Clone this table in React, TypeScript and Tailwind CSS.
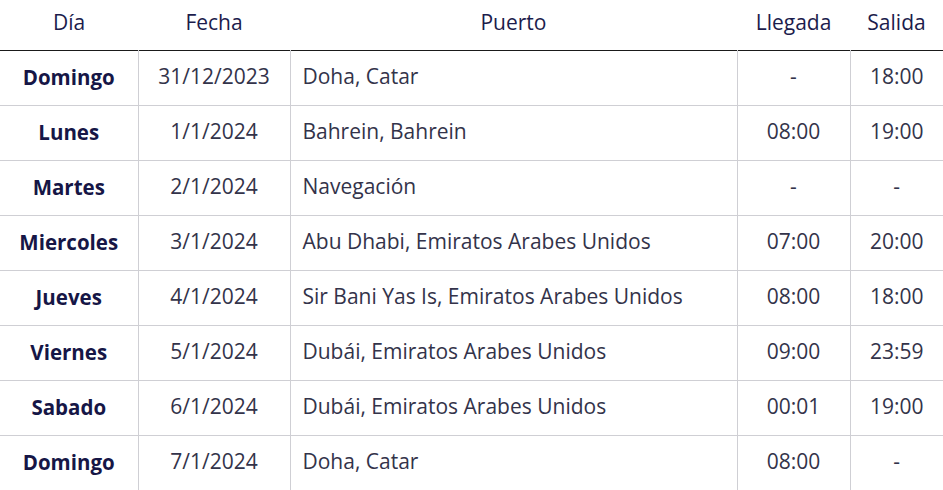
const rows = [
  { dia: "Domingo", fecha: "31/12/2023", puerto: "Doha, Catar", llegada: "-", salida: "18:00" },
  { dia: "Lunes", fecha: "1/1/2024", puerto: "Bahrein, Bahrein", llegada: "08:00", salida: "19:00" },
  { dia: "Martes", fecha: "2/1/2024", puerto: "Navegación", llegada: "-", salida: "-" },
  { dia: "Miercoles", fecha: "3/1/2024", puerto: "Abu Dhabi, Emiratos Arabes Unidos", llegada: "07:00", salida: "20:00" },
  { dia: "Jueves", fecha: "4/1/2024", puerto: "Sir Bani Yas Is, Emiratos Arabes Unidos", llegada: "08:00", salida: "18:00" },
  { dia: "Viernes", fecha: "5/1/2024", puerto: "Dubái, Emiratos Arabes Unidos", llegada: "09:00", salida: "23:59" },
  { dia: "Sabado", fecha: "6/1/2024", puerto: "Dubái, Emiratos Arabes Unidos", llegada: "00:01", salida: "19:00" },
  { dia: "Domingo", fecha: "7/1/2024", puerto: "Doha, Catar", llegada: "08:00", salida: "-" },
];

export default function App() {
  return (
    <div className="w-[943px] bg-white font-['Open_Sans',sans-serif] text-[21px]">
      <table className="w-full table-fixed border-collapse">
        <colgroup>
          <col className="w-[138px]" />
          <col className="w-[152px]" />
          <col className="w-[447px]" />
          <col className="w-[113px]" />
          <col className="w-[93px]" />
        </colgroup>
        <thead>
          <tr className="h-[50px] border-b border-[#1a1a1a] text-[#1c1c4c]">
            <th className="font-medium text-center align-middle pb-[5px]">Día</th>
            <th className="font-medium text-center align-middle pb-[5px]">Fecha</th>
            <th className="font-medium text-center align-middle pb-[5px]">Puerto</th>
            <th className="font-medium text-center align-middle pb-[5px]">Llegada</th>
            <th className="font-medium text-center align-middle pb-[5px]">Salida</th>
          </tr>
        </thead>
        <tbody className="text-[#33334a]">
          {rows.map((r, i) => (
            <tr key={i} className="h-[55px] border-b border-[#cfcfd4]">
              <td className="text-center font-bold text-[20.5px] text-[#161646] border-r border-[#cfcfd4] pb-[1px]">{r.dia}</td>
              <td className="text-center border-r border-[#cfcfd4] pb-[1px]">{r.fecha}</td>
              <td className="text-left pl-[12px] border-r border-[#cfcfd4] pb-[1px]">{r.puerto}</td>
              <td className="text-center border-r border-[#cfcfd4] pb-[1px]">{r.llegada}</td>
              <td className="text-center pb-[1px]">{r.salida}</td>
            </tr>
          ))}
        </tbody>
      </table>
    </div>
  );
}
